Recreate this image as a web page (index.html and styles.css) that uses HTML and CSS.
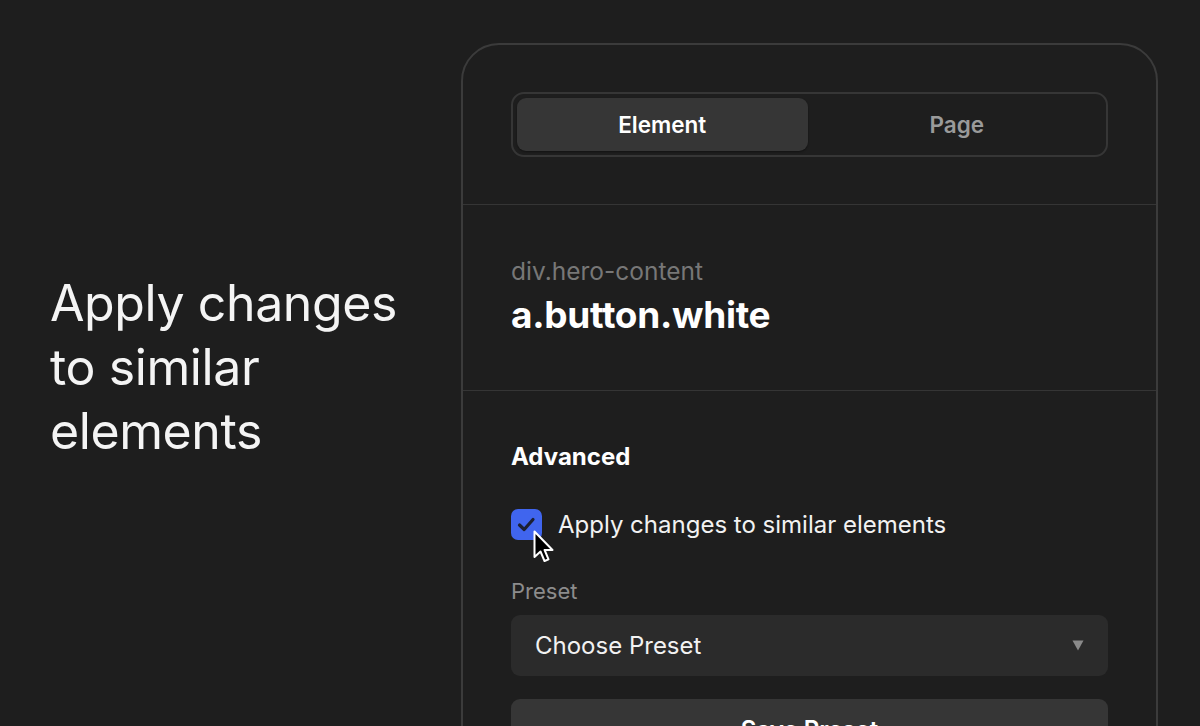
FILE: index.html
```html
<!DOCTYPE html>
<html lang="en">
  <head>
    <meta charset="UTF-8" />
    <meta name="viewport" content="width=device-width, initial-scale=1.0" />
    <title>Apply changes to similar elements</title>
    <link rel="stylesheet" href="styles.css">
  </head>
  <body>
    <section class="intro">
      <h1>Apply changes to similar elements</h1>
    </section>

    <div class="panel">
      <div class="panel-section tabs-section">
        <div class="tabs">
          <button class="tab active">Element</button>
          <button class="tab">Page</button>
        </div>
      </div>

      <div class="panel-section selector-section">
        <div class="parent-selector">div.hero-content</div>
        <div class="selector">a.button.white</div>
      </div>

      <div class="panel-section advanced-section">
        <h2>Advanced</h2>
        <label class="check-row">
          <span class="checkbox">
            <svg width="31" height="31" viewBox="0 0 31 31">
              <path d="M8.5 16 L13.2 20.5 L22 10.5" fill="none" stroke="#1c2033" stroke-width="3.2" stroke-linecap="round" stroke-linejoin="round" />
            </svg>
            <!-- mouse pointer over the box -->
            <svg class="cursor" width="24" height="36" viewBox="0 0 24 36">
              <path d="M1.5 1.5 L1.5 27 L7.5 21.5 L11.5 31 L15.5 29.3 L11.6 20 L19.5 20 Z" fill="#000" stroke="#fff" stroke-width="2" stroke-linejoin="round" />
            </svg>
          </span>
          <span class="check-label">Apply changes to similar elements</span>
        </label>

        <div class="field-label">Preset</div>
        <div class="select">
          <span>Choose Preset</span>
          <svg width="12" height="11" viewBox="0 0 12 11">
            <path d="M0.5 0.5 L11.5 0.5 L6 10.5 Z" fill="#8a8a8a" />
          </svg>
        </div>

        <button class="save-btn">Save Preset</button>
      </div>
    </div>
  </body>
</html>
```

FILE: styles.css
```css
body {
  font-family: Inter, "Noto Sans", sans-serif;
  background-color: #1e1e1e;
  color: #fff;
  margin: 0;
  height: 726px;
  overflow: hidden;
  display: flex;
  align-items: flex-start;
}

.intro {
  flex: none;
  width: 461px;
  padding: 271px 0 0 50px;
  box-sizing: border-box;
}

.intro h1 {
  margin: 0;
  max-width: 360px;
  font-size: 50px;
  font-weight: 400;
  line-height: 64px;
  letter-spacing: -0.4px;
  color: #f4f4f4;
}

.panel {
  flex: none;
  margin-top: 43px;
  width: 697px;
  height: 760px;
  box-sizing: border-box;
  border: 2px solid #3b3b3b;
  border-radius: 38px;
  background: #1e1e1e;
}

.panel-section {
  padding: 0 48px;
  border-bottom: 1px solid #353535;
}

.tabs-section {
  padding-top: 47px;
  padding-bottom: 47px;
}

.tabs {
  display: flex;
  height: 65px;
  box-sizing: border-box;
  padding: 4px;
  border: 2px solid #363636;
  border-radius: 13px;
  gap: 4px;
}

.tab {
  flex: 1;
  border: none;
  border-radius: 9px;
  background: transparent;
  font-family: Inter, "Noto Sans", sans-serif;
  font-size: 22.5px;
  font-weight: 600;
  color: #9a9a9a;
}

.tab.active {
  background: #363636;
  color: #fff;
  box-shadow: 0 1px 2px rgba(0, 0, 0, 0.4);
}

.selector-section {
  padding-top: 52px;
  padding-bottom: 52px;
}

.parent-selector {
  font-size: 24.5px;
  line-height: 28px;
  color: #777;
}

.selector {
  margin-top: 7px;
  font-size: 37px;
  line-height: 46px;
  font-weight: 700;
  letter-spacing: -0.3px;
  color: #fff;
}

.advanced-section {
  padding-top: 52px;
  border-bottom: none;
}

.advanced-section h2 {
  margin: 0;
  font-size: 24px;
  line-height: 28px;
  font-weight: 700;
}

.check-row {
  display: flex;
  align-items: center;
  gap: 16px;
  margin-top: 38px;
}

.checkbox {
  position: relative;
  width: 31px;
  height: 31px;
  border-radius: 7px;
  background: #4065ee;
  display: flex;
  align-items: center;
  justify-content: center;
}

.cursor {
  position: absolute;
  left: 22px;
  top: 21px;
}

.check-label {
  font-size: 24px;
  color: #f2f2f2;
}

.field-label {
  margin-top: 38px;
  font-size: 22px;
  line-height: 26px;
  color: #8c8c8c;
}

.select {
  margin-top: 11px;
  height: 61px;
  box-sizing: border-box;
  padding: 0 24px;
  border-radius: 9px;
  background: #2b2b2b;
  display: flex;
  align-items: center;
  justify-content: space-between;
  font-size: 24px;
  color: #f2f2f2;
}

.save-btn {
  margin-top: 23px;
  width: 100%;
  height: 61px;
  border: none;
  border-radius: 9px;
  background: #363636;
  font-family: Inter, "Noto Sans", sans-serif;
  font-size: 24px;
  font-weight: 600;
  color: #fff;
}
```
